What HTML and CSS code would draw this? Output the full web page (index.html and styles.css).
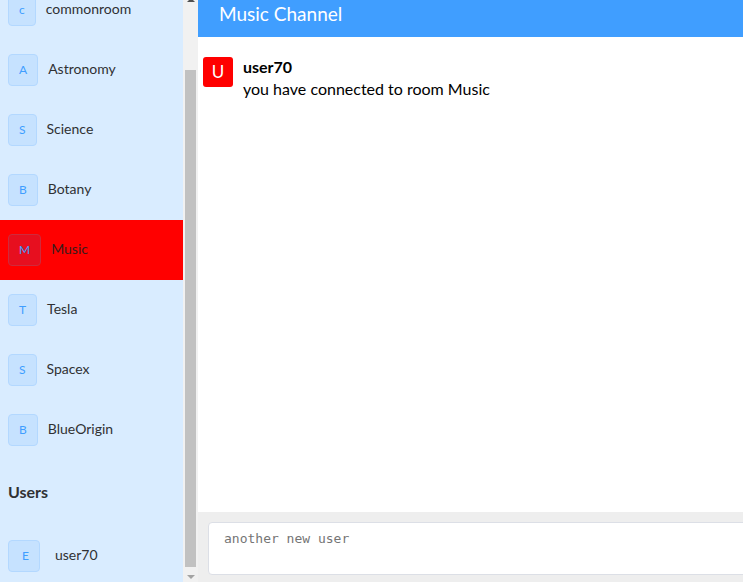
FILE: index.html
```html
<!DOCTYPE html>
<html lang="en">
<head>
<meta charset="utf-8">
<title>Music Channel</title>
<link rel="stylesheet" href="styles.css">
</head>
<body>
<div class="app">
  <aside class="sidebar">
    <div class="sidebar-scroll" id="sidebar">
      <div class="section-title rooms-title">Rooms</div>
      <ul class="list">
        <li class="item"><span class="avatar">c</span><span class="label">commonroom</span></li>
        <li class="item"><span class="avatar">A</span><span class="label">Astronomy</span></li>
        <li class="item"><span class="avatar">S</span><span class="label">Science</span></li>
        <li class="item"><span class="avatar">B</span><span class="label">Botany</span></li>
        <li class="item active"><span class="avatar">M</span><span class="label">Music</span></li>
        <li class="item"><span class="avatar">T</span><span class="label">Tesla</span></li>
        <li class="item"><span class="avatar">S</span><span class="label">Spacex</span></li>
        <li class="item"><span class="avatar">B</span><span class="label">BlueOrigin</span></li>
      </ul>
      <div class="section-title users-title">Users</div>
      <ul class="list">
        <li class="item user-item"><span class="avatar user-avatar">E</span><span class="label user-label">user70</span></li>
      </ul>
    </div>
    <div class="scrollbar" aria-hidden="true">
      <div class="sb-btn sb-up"><span class="arrow-up"></span></div>
      <div class="sb-track"><div class="sb-thumb"></div></div>
      <div class="sb-btn sb-down"><span class="arrow-down"></span></div>
    </div>
  </aside>
  <main class="main">
    <header class="channel-header">Music Channel</header>
    <section class="messages">
      <div class="message">
        <div class="msg-avatar">U</div>
        <div class="msg-body">
          <div class="msg-user">user70</div>
          <div class="msg-text">you have connected to room Music</div>
        </div>
      </div>
    </section>
    <footer class="composer">
      <textarea class="input" placeholder="another new user"></textarea>
    </footer>
  </main>
</div>
<script src="app.js"></script>
</body>
</html>
```

FILE: styles.css
```css
html, body {
  margin: 0;
  padding: 0;
  overflow: hidden;
}
body {
  font-family: Lato, "Open Sans", sans-serif;
  color: #303133;
}
.app {
  display: flex;
  height: calc(100vh + 8px);
}
.sidebar {
  flex: 0 0 198px;
  display: flex;
  background: #d9ecff;
}
.sidebar-scroll {
  flex: 1;
  min-width: 0;
  overflow: hidden;
}
.scrollbar {
  flex: 0 0 15px;
  display: flex;
  flex-direction: column;
  background: #f1f1f1;
}
.sb-btn {
  flex: 0 0 15px;
  display: flex;
  justify-content: center;
  align-items: center;
}
.sb-down {
  align-items: flex-start;
  padding-top: 8px;
  box-sizing: border-box;
}
.arrow-up {
  width: 0;
  height: 0;
  border-left: 4px solid transparent;
  border-right: 4px solid transparent;
  border-bottom: 4px solid #505050;
}
.arrow-down {
  width: 0;
  height: 0;
  border-left: 4px solid transparent;
  border-right: 4px solid transparent;
  border-top: 4px solid #a3a3a3;
}
.sb-track {
  flex: 1;
  display: flex;
  flex-direction: column;
  justify-content: flex-end;
  padding: 0 2px;
}
.sb-thumb {
  height: 497px;
  background: #c1c1c1;
}
.list {
  list-style: none;
  margin: 0;
  padding: 0;
}
.section-title {
  display: flex;
  align-items: center;
  padding-left: 8px;
  font-size: 16px;
  font-weight: 700;
  color: #303133;
}
.rooms-title {
  height: 64px;
}
.users-title {
  height: 69px;
  padding-bottom: 6px;
  box-sizing: border-box;
}
.item {
  display: flex;
  align-items: center;
  height: 60px;
  padding-left: 8px;
}
.item.active {
  background: #ff0000;
}
.avatar {
  box-sizing: border-box;
  height: 32px;
  line-height: 30px;
  padding: 0 10px;
  border: 1px solid #b3d8ff;
  border-radius: 4px;
  background: #c6e2ff;
  color: #409eff;
  font-size: 12px;
}
.item.active .avatar {
  background: #e70f1f;
  border-color: #cf2a3c;
}
.label {
  margin-left: 10px;
  margin-bottom: 3px;
  font-size: 14px;
  color: #303133;
}
.item.active .label {
  color: #3a1c1c;
}
.user-item {
  height: 53px;
}
.user-avatar {
  padding: 0 10px 0 13px;
}
.user-label {
  margin-left: 15px;
}
.main {
  flex: 1;
  display: flex;
  flex-direction: column;
  overflow: hidden;
  background: #fff;
  min-width: 0;
}
.channel-header {
  flex: 0 0 45px;
  height: 45px;
  line-height: 44px;
  padding-left: 21px;
  background: #409eff;
  color: #fff;
  font-size: 19px;
}
.messages {
  flex: 1;
  padding: 20px 5px;
}
.message {
  display: flex;
  gap: 10px;
}
.msg-avatar {
  width: 30px;
  height: 30px;
  line-height: 30px;
  text-align: center;
  border-radius: 3px;
  background: #ff0000;
  color: #fff;
  font-size: 17px;
}
.msg-user {
  font-weight: 700;
  font-size: 16px;
  line-height: 20px;
  color: #000;
}
.msg-text {
  font-size: 16px;
  line-height: 24px;
  color: #000;
}
.composer {
  flex: 0 0 70px;
  height: 70px;
  box-sizing: border-box;
  padding: 10px 0 0 10px;
  background: #eeeeee;
}
.input {
  display: block;
  width: 100%;
  box-sizing: content-box;
  padding: 8px 15px 6px;
  height: 37px;
  border: 1px solid #dcdfe6;
  border-radius: 4px;
  background: #fff;
  resize: none;
  font-family: "DejaVu Sans Mono", monospace;
  font-size: 13px;
  outline: none;
}
.input::placeholder {
  color: #757575;
}
```

FILE: app.js
```js
var sb = document.getElementById('sidebar');
sb.scrollTop = sb.scrollHeight;
window.scrollTo(0, 8);
document.documentElement.scrollTop = 8;
```
